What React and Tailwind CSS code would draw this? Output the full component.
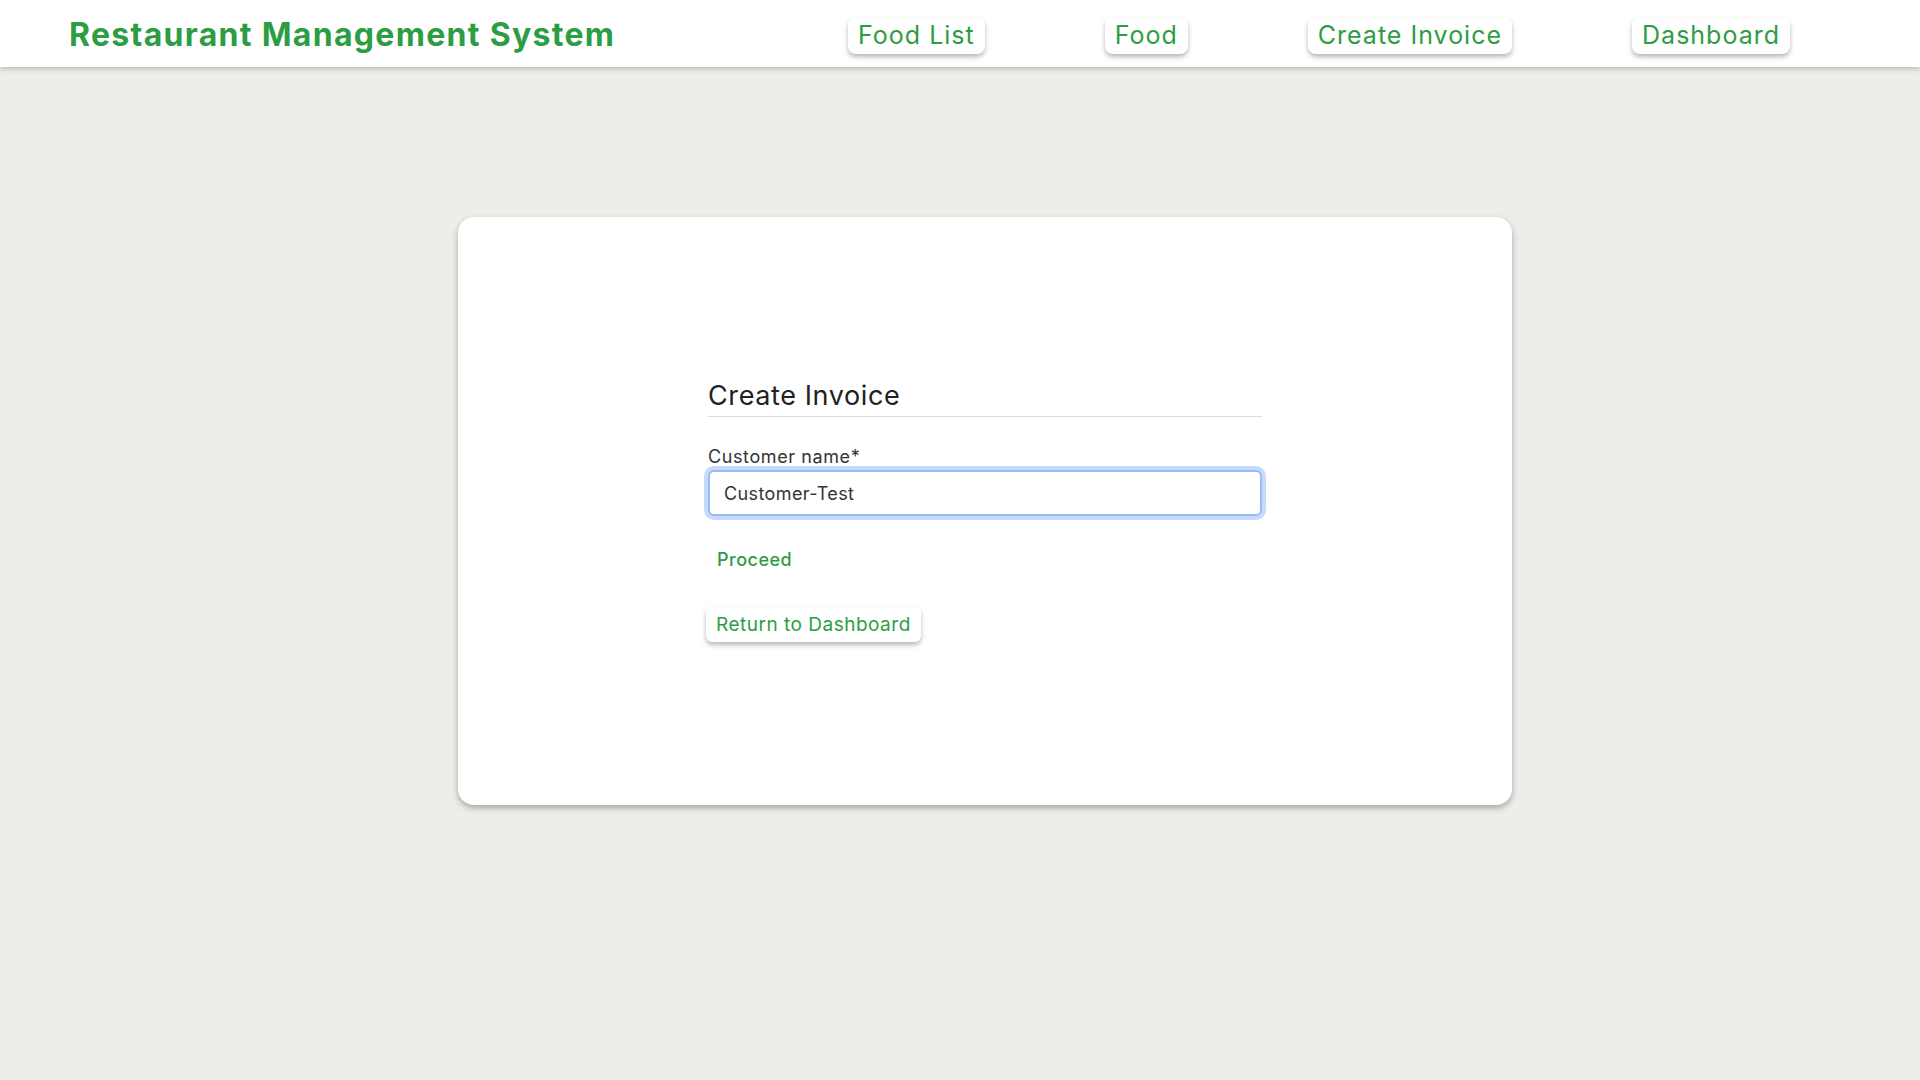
import { useState } from 'react';

const NAV = ['Food List', 'Food', 'Create Invoice', 'Dashboard'];

export default function App() {
  const [name, setName] = useState('Customer-Test');

  return (
    <div className="min-h-screen bg-[#ededea] font-['Inter',sans-serif]">
      {/* Header */}
      <header className="h-[67px] bg-white shadow-[0_2px_5px_rgba(0,0,0,0.22)] flex items-center justify-between pl-[69px] pr-[130px]">
        <h1 className="text-[32px] font-bold text-[#2d9d44] tracking-[1.3px] pt-[2px]">Restaurant Management System</h1>
        <nav className="flex gap-[120px] pt-[4px]">
          {NAV.map((n) => (
            <button
              key={n}
              className="px-[10px] py-[3px] bg-white rounded-lg text-[25px] leading-[31px] tracking-[1px] text-[#2d9d44] shadow-[0_3px_5px_rgba(0,0,0,0.28)]"
            >
              {n}
            </button>
          ))}
        </nav>
      </header>

      {/* Card */}
      <div className="pt-[150px]">
        <div className="ml-[458px] w-[1054px] h-[588px] bg-white rounded-2xl shadow-[0_3px_6px_rgba(0,0,0,0.3)] flex items-center justify-center">
          <div className="w-[554px]">
            <h2 className="text-[27px] leading-[32px] tracking-[0.6px] text-[#222] pb-[4px] border-b border-[#dcdcdc]">Create Invoice</h2>
            <label className="block mt-[30px] text-[18px] leading-[20px] tracking-[0.6px] text-[#333]">Customer name*</label>
            <input
              autoFocus
              value={name}
              onChange={(e) => setName(e.target.value)}
              className="mt-[3px] w-full h-[46px] px-[14px] text-[18px] tracking-[0.4px] text-[#333] bg-white rounded-md border-2 border-[#98bcf6] outline-none ring-4 ring-[#c6dbfc]"
            />
            <div className="mt-[24px]">
              <button className="px-[9px] py-[8px] text-[18px] leading-[24px] tracking-[0.5px] font-medium text-[#2d9d44]">Proceed</button>
            </div>
            <div className="mt-[27px]">
              <button className="-ml-[2px] px-[10px] h-[35px] pt-[2px] bg-white rounded-md text-[19px] tracking-[0.5px] text-[#2d9d44] shadow-[0_3px_5px_rgba(0,0,0,0.28)]">
                Return to Dashboard
              </button>
            </div>
          </div>
        </div>
      </div>
    </div>
  );
}
